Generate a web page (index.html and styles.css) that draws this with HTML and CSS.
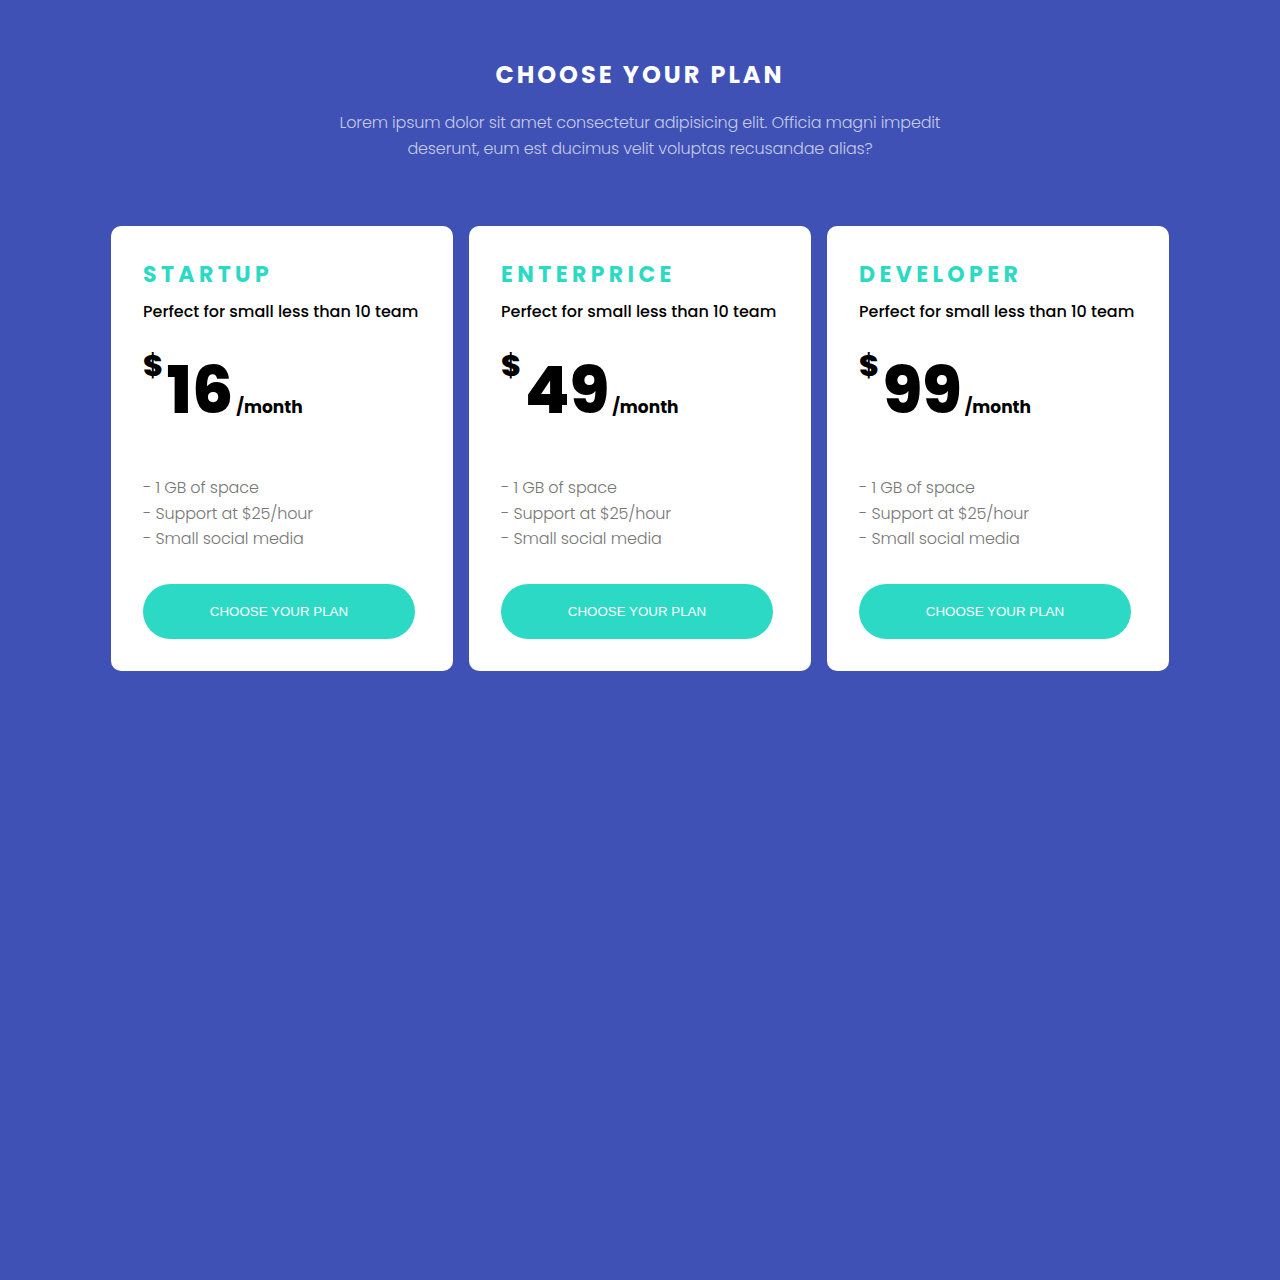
FILE: index.html
```html
<!DOCTYPE html>
<html lang="en">
<head>
<meta charset="utf-8">
<title>Choose your plan</title>
<link rel="stylesheet" href="styles.css">
</head>
<body>
<section class="pricing">
  <header class="intro">
    <h1 class="intro-title">CHOOSE YOUR PLAN</h1>
    <p class="intro-text">Lorem ipsum dolor sit amet consectetur adipisicing elit. Officia magni impedit deserunt, eum est ducimus velit voluptas recusandae alias?</p>
  </header>
  <div class="cards">
    <article class="card">
      <h2 class="card-title">STARTUP</h2>
      <p class="card-desc">Perfect for small less than 10 team</p>
      <div class="price"><span class="cur">$</span><span class="amount">16</span><span class="per">/month</span></div>
      <ul class="features">
        <li>- 1 GB of space</li>
        <li>- Support at $25/hour</li>
        <li>- Small social media</li>
      </ul>
      <button class="btn">CHOOSE YOUR PLAN</button>
    </article>
    <article class="card">
      <h2 class="card-title">ENTERPRICE</h2>
      <p class="card-desc">Perfect for small less than 10 team</p>
      <div class="price"><span class="cur">$</span><span class="amount">49</span><span class="per">/month</span></div>
      <ul class="features">
        <li>- 1 GB of space</li>
        <li>- Support at $25/hour</li>
        <li>- Small social media</li>
      </ul>
      <button class="btn">CHOOSE YOUR PLAN</button>
    </article>
    <article class="card">
      <h2 class="card-title">DEVELOPER</h2>
      <p class="card-desc">Perfect for small less than 10 team</p>
      <div class="price"><span class="cur">$</span><span class="amount">99</span><span class="per">/month</span></div>
      <ul class="features">
        <li>- 1 GB of space</li>
        <li>- Support at $25/hour</li>
        <li>- Small social media</li>
      </ul>
      <button class="btn">CHOOSE YOUR PLAN</button>
    </article>
  </div>
</section>
</body>
</html>
```
FILE: styles.css
```css
* { box-sizing: border-box; }
html, body { margin: 0; padding: 0; }
body {
  background: #3f51b5;
  font-family: Poppins, "Inter", "Noto Sans", sans-serif;
  min-height: 1280px;
}
.pricing {
  padding-top: 58px;
  display: flex;
  flex-direction: column;
  align-items: center;
}
.intro { text-align: center; width: 620px; }
.intro-title {
  margin: 0;
  color: #fff;
  font-size: 24px;
  font-weight: 700;
  letter-spacing: 3px;
  line-height: 34px;
}
.intro-text {
  margin: 18px 0 0;
  color: #c5cae9;
  font-size: 16px;
  font-weight: 300;
  line-height: 26px;
  letter-spacing: -0.17px;
}
.cards {
  margin-top: 64px;
  display: flex;
  gap: 16px;
}
.card {
  width: 342px;
  height: 445px;
  background: #fff;
  border-radius: 10px;
  padding: 32px;
  display: flex;
  flex-direction: column;
}
.card-title {
  margin: 2px 0 0;
  color: #2cd9c4;
  font-size: 22px;
  font-weight: 700;
  letter-spacing: 4.4px;
  line-height: 30px;
}
.card-desc {
  margin: 10px 0 0;
  color: #000;
  font-size: 16px;
  font-weight: 500;
  line-height: 24px;
}
.price {
  margin-top: 27px;
  display: flex;
  align-items: baseline;
  color: #000;
}
.cur { font-size: 30px; font-weight: 800; line-height: 30px; align-self: flex-start; }
.amount { font-size: 65px; font-weight: 800; line-height: 80px; margin-left: 4px; }
.per { font-size: 17px; font-weight: 700; line-height: 26px; margin-left: 3px; }
.features {
  list-style: none;
  margin: 44px 0 0;
  padding: 0;
  color: #777;
  font-size: 16px;
  font-weight: 300;
  line-height: 25.6px;
  letter-spacing: -0.12px;
}
.btn {
  margin-top: 32px;
  width: 272px;
  height: 55px;
  border: none;
  border-radius: 28px;
  background: #2cd9c4;
  color: #fff;
  font-family: "Liberation Sans", Arial, sans-serif;
  font-size: 13.33px;
}
```
